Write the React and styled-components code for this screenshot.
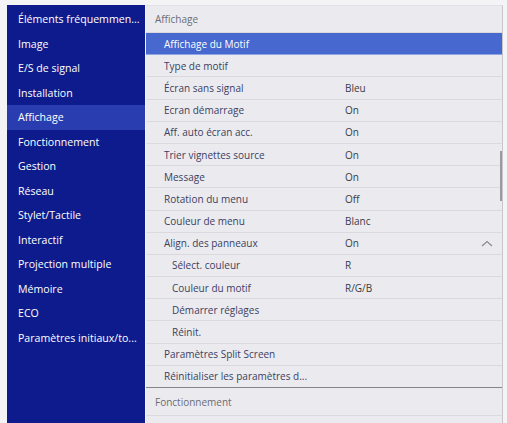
import React from "react";
import styled, { createGlobalStyle } from "styled-components";

const Global = createGlobalStyle`
  html, body { margin: 0; padding: 0; background: #f4f4f6; }
  body { font-family: "Open Sans", "Noto Sans", sans-serif; }
`;

const Frame = styled.div`
  display: flex;
  gap: 1px;
  height: 423px;
  padding: 5px 4px 0 7px;
  box-sizing: border-box;
  overflow: hidden;
`;

const Sidebar = styled.nav`
  width: 138px;
  flex: none;
  background: #0e1b8c;
  padding-top: 2px;
  box-sizing: border-box;
`;

const NavItem = styled.div`
  height: 24.5px;
  display: flex;
  align-items: center;
  padding-left: 11px;
  font-size: 10.6px;
  color: #ffffff;
  white-space: nowrap;
  background: ${(p) => (p.$active ? "#2a3db0" : "transparent")};
`;

const Panel = styled.section`
  flex: 1;
  position: relative;
  background: #ebebef;
  border-right: 1px solid #c6c6cb;
  border-top: 1px solid #e2e2e6;
  overflow: hidden;
`;

const Header = styled.div`
  height: ${(p) => p.$h}px;
  box-sizing: border-box;
  display: flex;
  align-items: center;
  padding-left: 9px;
  font-size: 10px;
  color: #6b6b76;
  border-bottom: 1px solid #dadade;
`;

const Row = styled.div`
  height: 22.2px;
  box-sizing: border-box;
  display: grid;
  grid-template-columns: 199px 1fr 30px;
  align-items: center;
  font-size: 10px;
  color: ${(p) => (p.$selected ? "#ffffff" : "#3c3e62")};
  background: ${(p) => (p.$selected ? "#4668cf" : "transparent")};
  border-bottom: 1px solid
    ${(p) => (p.$strong ? "#84848c" : p.$selected ? "#8fa6e6" : "#dadade")};
  white-space: nowrap;
`;

const Label = styled.span`
  padding-left: ${(p) => (p.$sub ? 26 : 18)}px;
  overflow: hidden;
`;

const Value = styled.span`
  color: #3a3b44;
`;

const Chevron = styled.svg`
  width: 12px;
  height: 7px;
  justify-self: start;
  margin-left: 9px;
`;

const ScrollThumb = styled.div`
  position: absolute;
  right: 0;
  top: 145px;
  width: 2px;
  height: 50px;
  background: #9a9aa2;
`;

const nav = [
  "Éléments fréquemmen...",
  "Image",
  "E/S de signal",
  "Installation",
  "Affichage",
  "Fonctionnement",
  "Gestion",
  "Réseau",
  "Stylet/Tactile",
  "Interactif",
  "Projection multiple",
  "Mémoire",
  "ECO",
  "Paramètres initiaux/to...",
];

const rows = [
  { label: "Affichage du Motif", selected: true },
  { label: "Type de motif" },
  { label: "Écran sans signal", value: "Bleu" },
  { label: "Ecran démarrage", value: "On" },
  { label: "Aff. auto écran acc.", value: "On" },
  { label: "Trier vignettes source", value: "On" },
  { label: "Message", value: "On" },
  { label: "Rotation du menu", value: "Off" },
  { label: "Couleur de menu", value: "Blanc" },
  { label: "Align. des panneaux", value: "On", chevron: true },
  { label: "Sélect. couleur", value: "R", sub: true },
  { label: "Couleur du motif", value: "R/G/B", sub: true },
  { label: "Démarrer réglages", sub: true },
  { label: "Réinit.", sub: true },
  { label: "Paramètres Split Screen" },
  { label: "Réinitialiser les paramètres d...", strong: true },
];

export default function App() {
  return (
    <>
      <Global />
      <Frame>
        <Sidebar>
          {nav.map((n) => (
            <NavItem key={n} $active={n === "Affichage"}>
              {n}
            </NavItem>
          ))}
        </Sidebar>
        <Panel>
          <Header $h={27}>Affichage</Header>
          {rows.map((r) => (
            <Row key={r.label} $selected={r.selected} $strong={r.strong}>
              <Label $sub={r.sub}>{r.label}</Label>
              <Value>{r.value || ""}</Value>
              {r.chevron ? (
                <Chevron viewBox="0 0 12 7">
                  <path d="M1 6 L6 1.5 L11 6" fill="none" stroke="#8a8a94" strokeWidth="1.2" />
                </Chevron>
              ) : (
                <span />
              )}
            </Row>
          ))}
          <Header $h={28}>Fonctionnement</Header>
          <Row />
          <ScrollThumb />
        </Panel>
      </Frame>
    </>
  );
}
